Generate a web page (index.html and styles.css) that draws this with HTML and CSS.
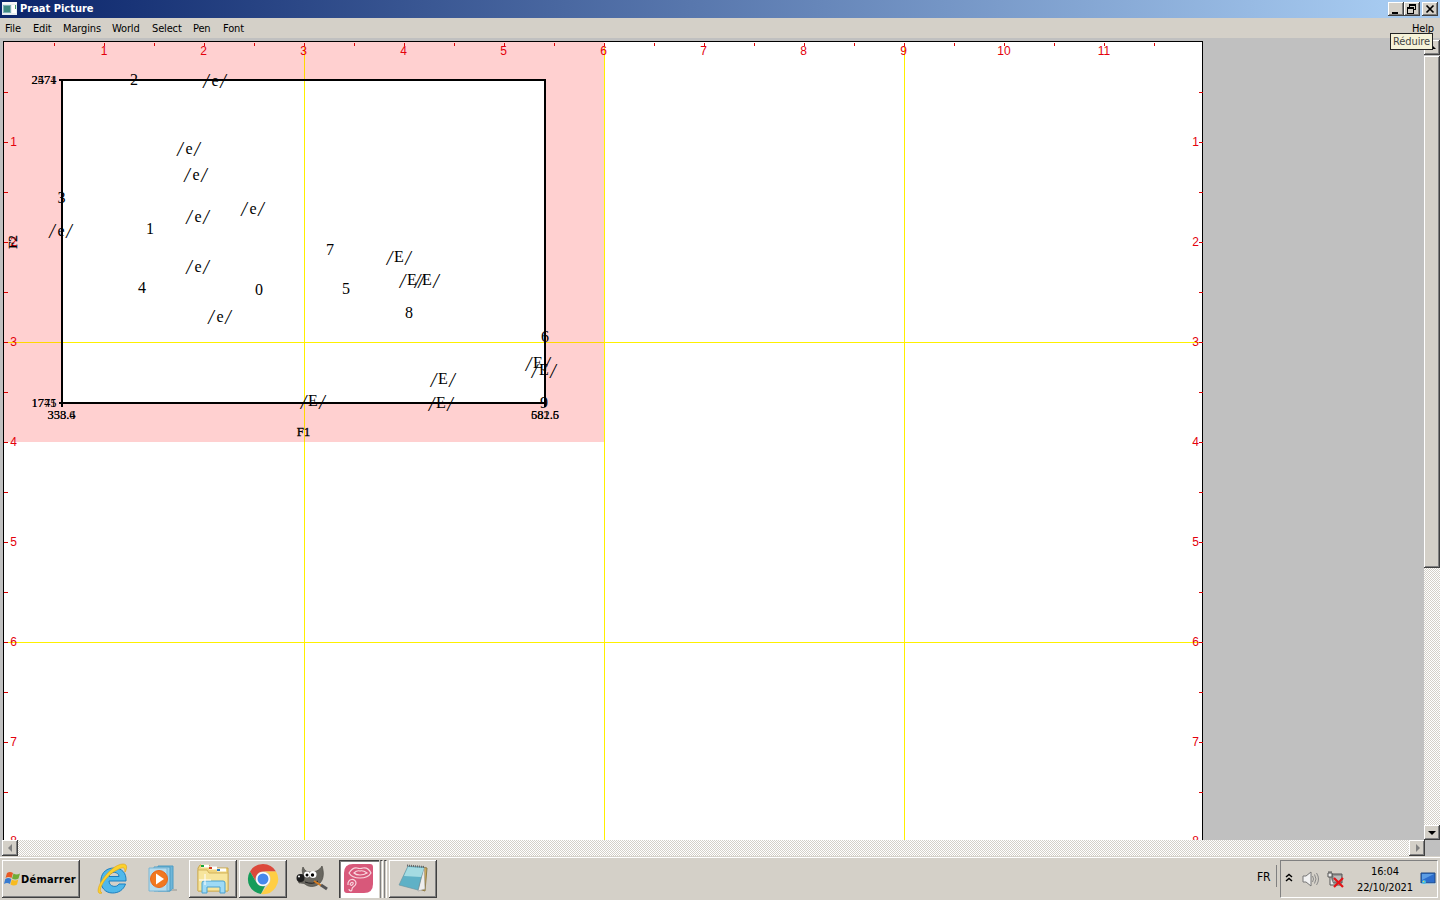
FILE: index.html
```html
<!DOCTYPE html>
<html lang="fr">
<head>
<meta charset="utf-8">
<title>Praat Picture</title>
<link rel="stylesheet" href="styles.css">
</head>
<body>
<div class="screen">
  <header class="titlebar">
    <svg class="appicon" width="15" height="13" viewBox="0 0 15 13"><rect width="15" height="13" fill="#e8eef0"/><rect x="1" y="3" width="8" height="8" fill="#7fb0b8"/><rect x="2" y="4" width="6" height="6" fill="#3f8a80"/><rect x="10" y="3" width="4" height="8" fill="#fff"/><rect x="13" y="3" width="1" height="4" fill="#45a06a"/><rect y="0" width="15" height="2" fill="#f8f8f8"/></svg>
    <h1 class="title">Praat Picture</h1>
    <div class="winbtns">
      <button class="wb"><svg width="14" height="12"><path d="M3 9h6v2H3z"/></svg></button>
      <button class="wb"><svg width="14" height="12"><path d="M4 1h7v6H9V6h1V3H5v1H4zM2 4h7v7H2zM3 6v4h5V6z" fill-rule="evenodd"/></svg></button>
      <button class="wb wb-close"><svg width="14" height="12"><path d="M3.500 2.500l7 7M10.500 2.500l-7 7" stroke="#000" stroke-width="1.700"/></svg></button>
    </div>
  </header>
  <nav class="menubar">
    <span class="m-file">File</span><span class="m-edit">Edit</span><span class="m-margins">Margins</span><span class="m-world">World</span><span class="m-select">Select</span><span class="m-pen">Pen</span><span>Font</span><span class="help">Help</span>
  </nav>
  <main class="work">
    <svg class="canvas" width="1201" height="799" viewBox="3 41 1201 799">
      <rect x="3" y="41" width="1200" height="810" fill="#000"/>
      <rect x="4" y="42" width="1198" height="810" fill="#fff"/>
      <rect x="4" y="42" width="600" height="400" fill="#ffd0d0"/>
      <rect x="62" y="80" width="483" height="323" fill="#fff"/>
      <path class="grid" d="M304.500 46V840M604.500 46V840M904.500 46V840M7 342.500H1199M7 642.500H1199"/>
      <path class="grid grid-sel" d="M304.500 46V80M304.500 404V442M7 342.500H62M546 342.500H604"/>
      <g class="ticks">
        <path d="M54 44.500H1190" stroke-width="3" stroke-dasharray="1 49"/>
        <path d="M6 92V840M1200.500 92V840" stroke-width="4" stroke-dasharray="1 49"/>
      </g>
      <g class="nums">
        <text x="104" y="55">1</text><text x="203.500" y="55">2</text><text x="303.500" y="55">3</text><text x="403.500" y="55">4</text><text x="503.500" y="55">5</text><text x="603.500" y="55">6</text><text x="703.500" y="55">7</text><text x="803.500" y="55">8</text><text x="903.500" y="55">9</text><text x="1004" y="55">10</text><text x="1104" y="55">11</text>
        <text x="13.500" y="146">1</text><text x="13.500" y="246">2</text><text x="13.500" y="346">3</text><text x="13.500" y="446">4</text><text x="13.500" y="546">5</text><text x="13.500" y="646">6</text><text x="13.500" y="746">7</text><text x="13.500" y="845">8</text>
        <text x="1195.500" y="146">1</text><text x="1195.500" y="246">2</text><text x="1195.500" y="346">3</text><text x="1195.500" y="446">4</text><text x="1195.500" y="546">5</text><text x="1195.500" y="646">6</text><text x="1195.500" y="746">7</text><text x="1195.500" y="845">8</text>
      </g>
      <path class="frame" d="M62 80H545V403H62ZM59 80H62M59 403H62M62 403V407M545 403V407"/>
      <g class="marks">
        <text x="134" y="85">2</text><text x="61.500" y="203">3</text><text x="150" y="234">1</text><text x="142" y="293">4</text><text x="259" y="295">0</text><text x="330" y="255">7</text><text x="346" y="294">5</text><text x="409" y="318">8</text><text x="545" y="342">6</text><text x="544" y="408">9</text>
      </g>
      <g class="marks">
        <text transform="translate(215 86)"><tspan class="s" x="-9" y="2">/</tspan><tspan x="0" y="0">e</tspan><tspan class="s" x="8" y="2">/</tspan></text>
        <text transform="translate(189 154)"><tspan class="s" x="-9" y="2">/</tspan><tspan x="0" y="0">e</tspan><tspan class="s" x="8" y="2">/</tspan></text>
        <text transform="translate(196 180)"><tspan class="s" x="-9" y="2">/</tspan><tspan x="0" y="0">e</tspan><tspan class="s" x="8" y="2">/</tspan></text>
        <text transform="translate(253 214)"><tspan class="s" x="-9" y="2">/</tspan><tspan x="0" y="0">e</tspan><tspan class="s" x="8" y="2">/</tspan></text>
        <text transform="translate(198 222)"><tspan class="s" x="-9" y="2">/</tspan><tspan x="0" y="0">e</tspan><tspan class="s" x="8" y="2">/</tspan></text>
        <text transform="translate(61 236)"><tspan class="s" x="-9" y="2">/</tspan><tspan x="0" y="0">e</tspan><tspan class="s" x="8" y="2">/</tspan></text>
        <text transform="translate(198 272)"><tspan class="s" x="-9" y="2">/</tspan><tspan x="0" y="0">e</tspan><tspan class="s" x="8" y="2">/</tspan></text>
        <text transform="translate(220 322)"><tspan class="s" x="-9" y="2">/</tspan><tspan x="0" y="0">e</tspan><tspan class="s" x="8" y="2">/</tspan></text>
        <text transform="translate(399 262)"><tspan class="s" x="-9.500" y="3">/</tspan><tspan x="0" y="0">E</tspan><tspan class="s" x="9" y="3">/</tspan></text>
        <text transform="translate(412 285)"><tspan class="s" x="-9.500" y="3">/</tspan><tspan x="0" y="0">E</tspan><tspan class="s" x="9" y="3">/</tspan></text>
        <text transform="translate(427 285)"><tspan class="s" x="-9.500" y="3">/</tspan><tspan x="0" y="0">E</tspan><tspan class="s" x="9" y="3">/</tspan></text>
        <text transform="translate(538 368)"><tspan class="s" x="-9.500" y="3">/</tspan><tspan x="0" y="0">E</tspan><tspan class="s" x="9" y="3">/</tspan></text>
        <text transform="translate(544 375)"><tspan class="s" x="-9.500" y="3">/</tspan><tspan x="0" y="0">E</tspan><tspan class="s" x="9" y="3">/</tspan></text>
        <text transform="translate(443 384)"><tspan class="s" x="-9.500" y="3">/</tspan><tspan x="0" y="0">E</tspan><tspan class="s" x="9" y="3">/</tspan></text>
        <text transform="translate(441 408)"><tspan class="s" x="-9.500" y="3">/</tspan><tspan x="0" y="0">E</tspan><tspan class="s" x="9" y="3">/</tspan></text>
        <text transform="translate(313 406)"><tspan class="s" x="-9.500" y="3">/</tspan><tspan x="0" y="0">E</tspan><tspan class="s" x="9" y="3">/</tspan></text>
      </g>
      <g class="axis">
        <text x="44" y="84">2474</text><text x="44" y="84">2571</text><text x="44" y="407">1741</text><text x="44" y="407">1775</text>
        <text x="61.500" y="419">338.4</text><text x="61.500" y="419">353.6</text><text x="545" y="419">581.6</text><text x="545" y="419">682.5</text>
        <text class="name" x="303.500" y="436">F1</text><text class="name" transform="translate(17 242) rotate(-90)">F2</text>
      </g>
    </svg>
    <div class="gray"></div>
    <div class="vscroll">
      <button class="sb"><svg width="14" height="13"><path d="M7 4l4 4H3z"/></svg></button>
      <div class="thumb"></div>
      <div class="track"></div>
      <button class="sb"><svg width="14" height="13"><path d="M3 5h8l-4 4z"/></svg></button>
    </div>
    <div class="tooltip">Réduire</div>
  </main>
  <div class="hscroll">
    <button class="sb"><svg width="13" height="13"><path d="M8 2v8L4 6z" fill="#808080"/></svg></button>
    <div class="track"></div>
    <button class="sb"><svg width="13" height="13"><path d="M5 2v8l4-4z" fill="#808080"/></svg></button>
    <div class="corner"></div>
  </div>
  <footer class="taskbar">
    <button class="start"><svg width="17" height="16" viewBox="0 0 17 16"><path d="M3 2c2-1.500 4-1.500 6 0L7.500 7c-2-1.300-4-1.300-6 0z" fill="#e85a25"/><path d="M9.500 2.500c2 1.200 4 1.200 6.500 0L14.500 7.500c-2 1.200-4.500 1.200-6.500 0z" fill="#70ac35"/><path d="M1.300 8c2-1.300 4-1.300 6 0L6 13c-2-1.300-4-1.300-6 0z" fill="#387bd0"/><path d="M7.800 8.500c2 1.200 4.300 1.200 6.500 0L13 13.500c-2 1.200-4.500 1.200-6.500 0z" fill="#f7bb20"/></svg><b>Démarrer</b></button>
    <div class="apps">
      <div class="app"><svg width="32" height="32" viewBox="0 0 32 32"><path d="M29 18H12c0 6 8 7 10 3h6.500c-2 6-7 9-13 9C8 30 3 24 4 16 5 9 10 5 17 5c8 0 12.500 5 12 13zM12 13.500h10c0-5-9-6-10 0z" fill="#4fb8ea" stroke="#1a7fc0"/><path d="M5 30C0 32 0 26 4 19 9 10 19 1 26 1c5 0 4 5 2 8 0-5-2-5-6-3C13 10 7 17 4 24c-1 3-1 5 1 6z" fill="#fbd12c" stroke="#e0a010" stroke-width=".6"/></svg></div>
      <div class="app"><svg width="32" height="28" viewBox="0 0 32 28"><path d="M11 1h15v23l-3 2H11z" fill="#6fb6d8" stroke="#4d9cc4"/><path d="M7 2h16v24H7z" fill="#9ed0e8" stroke="#4d9cc4"/><path d="M2 3h18v23H2z" fill="#b5dcef" stroke="#7db6d3"/><path d="M25 25h5" stroke="#b5b2ab" stroke-width="2"/><circle cx="12" cy="14" r="8.500" fill="#f17820" stroke="#e8661a"/><path d="M9 8.500l8 5.500-8 5.500z" fill="#fff"/></svg></div>
      <div class="app raised"><svg width="34" height="34" viewBox="0 0 34 34"><path d="M2 6l2-3h9l2 3h17v23H2z" fill="#f0d67e" stroke="#c9a64b"/><path d="M5 4h8M13 6h8M21 8h9" stroke="#fff" stroke-width="3"/><path d="M5 4h3" stroke="#14a83b" stroke-width="2"/><path d="M13 6h3" stroke="#d33c20" stroke-width="2"/><path d="M21 8h3" stroke="#2277c5" stroke-width="2"/><path d="M2 8h9l2 3h19v18H2z" fill="#f7e59c" stroke="#d3b35c"/><path d="M6 31V21q0-2 2-2h19q2 0 2 2v10h-5v-6H11v6z" fill="#9edaf5" stroke="#4ba1cf"/><path d="M9 12v11M3 18h12" stroke="#fff"/></svg></div>
      <div class="app raised"><svg width="32" height="32" viewBox="0 0 32 32"><path d="M3 8.500A15 15 0 0 1 29 8.500H16a7.500 7.500 0 0 0-7 10z" fill="#dc493b"/><path d="M3 8.500l6.500 11A7.500 7.500 0 0 0 18 23l-4 8A15 15 0 0 1 3 8.500z" fill="#169c5a"/><path d="M29 8.500H16c7 0 9 7 6.500 11.500L14 31A15 15 0 0 0 29 8.500z" fill="#ffce44"/><circle cx="16" cy="16" r="7" fill="#fff"/><circle cx="16" cy="16" r="5.500" fill="#4688ed"/></svg></div>
      <div class="app"><svg width="34" height="28" viewBox="0 0 34 28"><path d="M7 2c2 4 4 5 7 5 5 0 9-1 12-6 2 6 2 13-2 17-5 5-12 4-15 1-2-1-4-1-6-1-2-4 1-8 4-9-1-2-1-5 0-7z" fill="#696760" stroke="#4a4944" stroke-width=".7"/><circle cx="4.500" cy="13" r="4" fill="#1e1e1e"/><circle cx="3" cy="11.500" r="1" fill="#fff"/><circle cx="11" cy="9.500" r="3" fill="#fff"/><circle cx="17" cy="9.500" r="3.500" fill="#fff"/><circle cx="11" cy="10" r="1.500"/><circle cx="16.500" cy="10" r="1.700"/><path d="M9 17q8 3 13-1" fill="none" stroke="#222"/><path d="M18 16l8 5" stroke="#d47b20" stroke-width="2"/><path d="M25 20l6 4" stroke="#555" stroke-width="3"/></svg></div>
      <div class="app pressed"><svg width="30" height="30" viewBox="0 0 30 30"><path d="M9 0h17q3 0 3 3v17q0 9-9 9H3q-3 0-3-3V9Q0 0 9 0z" fill="#d8587a"/><g fill="none" stroke="#f8d6df" stroke-width="1.200"><path d="M5 9q4-6 8-5 3 1 6 0 5-1 8 5-3 5-11 5T5 9z"/><path d="M10 9q3-3 6-2 3-1 7 2-3 2-7 2t-6-2z"/><path d="M4 21c-1-7 8-7 8-2 0 4-4 3-4 6 0 3-3 2-3 0M6 21c1-4 4-3 3-1s-2 1-2 2"/></g></svg></div>
      <div class="slivers"><i></i><i></i></div>
      <div class="app raised"><svg width="34" height="32" viewBox="0 0 34 32"><path d="M26 4l5 1-2 23-6-2z" fill="#cba95b" stroke="#8f7b45"/><path d="M28 4l1 22-7 2z" fill="#eee" stroke="#999" stroke-width=".6"/><path d="M12 3l16 1-6 23-19-5z" fill="#5fb1c6" stroke="#67929d" stroke-width=".6"/><path d="M12 4l16 1-3 9-17-1z" fill="#a4dbe2"/><path d="M11 2.500l18 1.500" stroke="#666" stroke-width="2" stroke-dasharray="1 1"/></svg></div>
    </div>
    <div class="lang">FR</div>
    <div class="tray">
      <svg class="chev" width="8" height="10"><path d="M1 4l3-2.500L7 4M1 8l3-2.500L7 8" fill="none" stroke="#000" stroke-width="1.500"/></svg>
      <svg class="snd" width="17" height="16"><path d="M1 5h3l5-4v14l-5-4H1z" fill="#f2f2f2" stroke="#777"/><path d="M10.500 5q2 3 0 6M12.500 3.500q3 4.500 0 9M14.500 2q4 6 0 12" fill="none" stroke="#888"/></svg>
      <svg class="net" width="17" height="17"><path d="M5 3h10v9H5z" fill="#999" stroke="#555"/><path d="M7 5h7v5H7z" fill="#bbb"/><path d="M1 2h4v4H1zM2 0v2M4 0v2M3 6v8h4M7 14h6" fill="#eee" stroke="#555"/><path d="M7 7l9 9M16 7l-9 9" stroke="#e51317" stroke-width="2.200"/></svg>
      <div class="clock"><span>16:04</span><span>22/10/2021</span></div>
      <svg class="desk" width="16" height="14"><path d="M1 1h14v10H1z" fill="#2d6dcc" stroke="#204a80"/><path d="M2 2h12L2 8z" fill="#5c9de4"/><path d="M0 12h16" stroke="#bcd8eb" stroke-width="1"/><circle cx="4" cy="10" r="2" fill="#4abfe0"/><path d="M3 9h1v1H3z" fill="#ffd33d"/></svg>
    </div>
  </footer>
</div>
</body>
</html>
```
FILE: styles.css
```css
* { box-sizing: border-box; }
body { margin: 0; overflow: hidden; font-family: "DejaVu Sans Condensed", "DejaVu Sans", sans-serif; }
svg { display: block; flex: none; }
button { padding: 0; margin: 0; border: 0; font: inherit; background: #d4d0c8; display: flex; align-items: center; justify-content: center; flex: none; }
.screen { width: 1440px; height: 900px; display: flex; flex-direction: column; background: #d4d0c8; overflow: hidden; }

.titlebar { height: 18px; flex: none; display: flex; align-items: center; padding: 0 2px; background: linear-gradient(90deg, #0a246a, #a6caf0 96%); }
.appicon { margin-top: -1px; }
.title { margin: 0 0 0 3px; color: #fff; font: bold 11px/18px "DejaVu Sans Condensed", sans-serif; }
.winbtns { margin-left: auto; display: flex; }
.wb, .sb { box-shadow: inset -1px -1px #404040, inset 1px 1px #fff, inset -2px -2px #808080; }
.wb { width: 16px; height: 14px; }
.wb-close { margin-left: 2px; }

.menubar { height: 20px; flex: none; display: flex; padding: 0 6px 0 5px; font: 11px/21px "DejaVu Sans Condensed", sans-serif; letter-spacing: -.15px; }
.menubar span { white-space: nowrap; }
.m-file { width: 28px; }
.m-edit { width: 30px; }
.m-margins { width: 49px; }
.m-world { width: 40px; }
.m-select { width: 41px; }
.m-pen { width: 30px; }
.menubar .help { margin-left: auto; }

.work { height: 802px; flex: none; display: flex; position: relative; background: #c0c0c0; padding: 3px 0 0 3px; }
.canvas { overflow: hidden; }
.grid { stroke: #fff000; stroke-width: 1; fill: none; shape-rendering: crispEdges; }
.grid-sel { stroke: #ffd800; }
.ticks path { stroke: #dc0000; fill: none; shape-rendering: crispEdges; }
.nums text { font: 12px "Liberation Sans", sans-serif; fill: #e4000c; text-anchor: middle; }
.frame { fill: none; stroke: #000; stroke-width: 2; shape-rendering: crispEdges; }
.marks text { font: 16px "Liberation Serif", serif; text-anchor: middle; }
.marks .s { font-size: 20px; font-style: italic; }
.axis text { font: 12.5px "Liberation Serif", serif; text-anchor: middle; }
.axis .name { font-size: 13px; stroke: #000; stroke-width: .3px; }
.gray { flex: 1; }
.vscroll { width: 16px; margin-top: -1px; display: flex; flex-direction: column; }
.vscroll .sb { width: 16px; height: 15px; }
.thumb { height: 512px; margin-top: 1px; background: #d4d0c8; box-shadow: inset -1px -1px #404040, inset 1px 1px #fff, inset -2px -2px #808080; flex: none; }
.track { flex: 1; background: repeating-conic-gradient(#fff 0 25%, #d4d0c8 0 50%) 0 0 / 2px 2px; }
.tooltip { position: absolute; left: 1390px; top: -5px; width: 43px; height: 17px; border: 1px solid #222; background: #f5f2d9; color: #444; font: 11px/16px "DejaVu Sans Condensed", sans-serif; text-align: center; white-space: nowrap; letter-spacing: -.1px; }

.hscroll { height: 16px; flex: none; display: flex; padding-left: 2px; background: #c0c0c0; }
.hscroll .sb { width: 16px; }
.corner { width: 15px; background: #c0c0c0; }

.taskbar { height: 44px; flex: none; display: flex; border-top: 1px solid #d4d0c8; box-shadow: inset 0 1px #fff; padding: 3px 2px 0; }
.start { width: 78px; height: 38px; gap: 0; padding-right: 2px; font: bold 11px "DejaVu Sans Condensed", sans-serif; }
.start b { letter-spacing: .2px; }
.start, .raised { box-shadow: inset -1px -1px #404040, inset 1px 1px #fff, inset -2px -2px #808080; }
.apps { display: flex; margin-left: 9px; }
.app { width: 48px; height: 38px; margin-right: 2px; display: flex; align-items: center; justify-content: center; flex: none; }
.pressed { width: 40px; margin-right: 0; background: #fff; box-shadow: inset 1px 1px #404040, inset 2px 2px #808080, inset -1px -1px #fff; }
.slivers { width: 10px; display: flex; gap: 1px; padding-left: 1px; height: 38px; }
.slivers i { width: 3px; border-top: 1px solid #404040; border-right: 1px solid #fff; border-left: 1px solid #808080; }
.lang { margin-left: auto; width: 20px; height: 22px; margin-top: 5px; margin-right: 3px; border-right: 1px solid #808080; font: 12px/24px "DejaVu Sans Condensed", sans-serif; letter-spacing: -.1px; }
.tray { width: 158px; height: 38px; display: flex; align-items: center; border: 1px solid; border-color: #808080 #fff #fff #808080; padding-left: 4px; }
.chev { margin-top: -2px; }
.snd { margin-left: 9px; }
.net { margin-left: 8px; }
.clock { width: 68px; margin-left: 7px; margin-top: 1px; text-align: center; font: 11px/16px "DejaVu Sans Condensed", sans-serif; display: flex; flex-direction: column; letter-spacing: -.1px; }
.desk { margin-left: 1px; }
```
